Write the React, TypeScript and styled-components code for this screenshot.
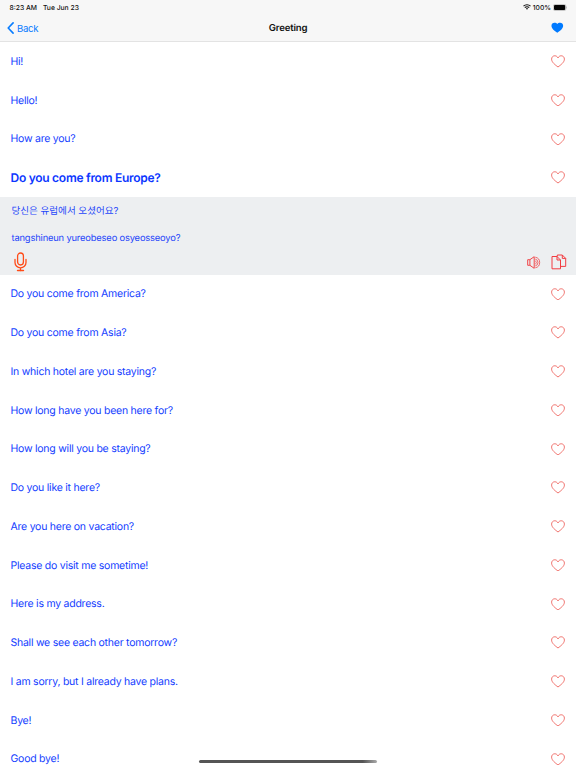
import React from "react";
import styled, { createGlobalStyle } from "styled-components";

const GlobalStyle = createGlobalStyle`
  *, *::before, *::after { box-sizing: border-box; }
  html, body { margin: 0; padding: 0; background: #fff; overflow: hidden; }
  body { font-family: Inter, "Noto Sans CJK KR", sans-serif; text-rendering: geometricPrecision; }
  svg { display: block; flex: none; }
`;

const Screen = styled.main`
  position: relative;
  width: 576px;
  height: 768px;
  display: flex;
  flex-direction: column;
  overflow: hidden;
  background: #fff;
`;

const Header = styled.header`
  flex: none;
  height: 42px;
  background: #f7f7f7;
  border-bottom: 1px solid #e3e3e3;
`;

const StatusBar = styled.div`
  height: 14px;
  padding: 0 9px 0 9.5px;
  display: flex;
  align-items: center;
  justify-content: space-between;
  font-size: 6.75px;
  font-weight: 500;
  color: #111;
`;

const StatusGroup = styled.div<{ $gap: number }>`
  display: flex;
  align-items: center;
  gap: ${(p) => p.$gap}px;
`;

const NavBar = styled.nav`
  height: 28px;
  padding: 0 12.5px 0 7px;
  display: grid;
  grid-template-columns: 1fr auto 1fr;
  align-items: center;
`;

const IconButton = styled.button`
  appearance: none;
  display: flex;
  align-items: center;
  border: 0;
  padding: 0;
  background: none;
  font: inherit;
  color: inherit;
`;

const BackButton = styled(IconButton)`
  gap: 3px;
  font-size: 9.6px;
  line-height: 13px;
  letter-spacing: -0.3px;
  color: #0a7cff;
`;

const Title = styled.h1`
  margin: 0 0 0 5.5px;
  padding-top: 1px;
  font-size: 9.6px;
  line-height: 13px;
  letter-spacing: -0.16px;
  font-weight: 600;
  color: #111;
`;

const NavAction = styled(IconButton)`
  justify-self: end;
`;

const Row = styled.div<{ $selected?: boolean }>`
  flex: none;
  height: 38.75px;
  padding: 0 11.5px 0 10.5px;
  display: flex;
  align-items: center;
  justify-content: space-between;
  color: ${(p) => (p.$selected ? "#0c37ff" : "#1440ff")};
  font-size: ${(p) => (p.$selected ? 12 : 10.5)}px;
  font-weight: ${(p) => (p.$selected ? 600 : 400)};
  letter-spacing: ${(p) => (p.$selected ? -0.27 : -0.24)}px;
  line-height: 16px;
  white-space: nowrap;
`;

const PhraseText = styled.span<{ $selected?: boolean }>`
  padding-top: ${(p) => (p.$selected ? 0.5 : 1)}px;
`;

const Detail = styled.section`
  flex: none;
  height: 77.5px;
  padding: 7px 9.5px 0 11.5px;
  background: #edeff1;
  color: #1d45fa;
  font-size: 9.55px;
`;

const Translation = styled.p`
  margin: 0;
  height: 16px;
  line-height: 16px;
  white-space: nowrap;
`;

const Romanization = styled(Translation)`
  margin-top: 10.5px;
  font-size: 9.35px;
  letter-spacing: -0.17px;
`;

const Actions = styled.div`
  margin-top: 5.5px;
  padding-left: 2.5px;
  height: 20px;
  display: flex;
  align-items: center;
  justify-content: space-between;
`;

const ActionGroup = styled.div`
  display: flex;
  align-items: center;
  gap: 10px;
`;

const HomeIndicator = styled.div`
  position: absolute;
  left: 199px;
  top: 760px;
  width: 178px;
  height: 3px;
  border-radius: 2px;
  background: linear-gradient(90deg, #555 0%, #555 92%, #aaa 100%);
`;

const HEART =
  "M7 12.3C4.2 10.1.6 7.5.6 4.2.6 2.2 2 .8 3.8.8 5.3.8 6.4 1.7 7 3 7.6 1.7 8.7.8 10.2.8c1.8 0 3.2 1.4 3.2 3.4 0 3.3-3.6 5.9-6.4 8.1Z";

const Heart = () => (
  <svg width="14" height="12.7" viewBox="0 0 14 13" preserveAspectRatio="none" fill="none" stroke="#ee625c" strokeWidth=".9" strokeLinejoin="round">
    <path d={HEART} />
  </svg>
);

const SolidHeart = () => (
  <svg width="12.6" height="11.4" viewBox="0 0 14 13" preserveAspectRatio="none" fill="#007aff">
    <path d="M7 12.4C4 10.2.5 7.6.5 4.3.5 2.2 2 .8 3.8.8 5.3.8 6.5 1.4 7 2.3 7.5 1.4 8.7.8 10.2.8c1.8 0 3.3 1.4 3.3 3.5 0 3.3-3.5 5.9-6.5 8.1Z" />
  </svg>
);

const Chevron = () => (
  <svg width="7" height="12" viewBox="0 0 7 12" fill="none" stroke="#087cff" strokeWidth="1.6" strokeLinecap="round" strokeLinejoin="round">
    <path d="M6.1.9 1.2 6l4.9 5.1" />
  </svg>
);

const Wifi = () => (
  <svg width="8" height="6" viewBox="0 0 8 6" fill="none" stroke="#111" strokeWidth="1.1">
    <path d="M.5 2.2a5 5 0 0 1 7 0M1.8 3.6a3.1 3.1 0 0 1 4.4 0" />
    <path d="M2.9 4.5a1.6 1.6 0 0 1 2.2 0L4 5.8Z" fill="#111" stroke="none" />
  </svg>
);

const Battery = () => (
  <svg width="14" height="7" viewBox="0 0 14 7">
    <rect x=".3" y=".5" width="12.6" height="6" rx="1.6" fill="none" stroke="#999" strokeWidth=".5" />
    <rect x="1" y="1.1" width="11.2" height="4.8" rx="1" fill="#050505" />
    <path d="M13.3 2.5c.7.2.7 1.8 0 2Z" fill="#999" />
  </svg>
);

const Microphone = () => (
  <svg width="13" height="20" viewBox="0 0 13 20" fill="none" stroke="#ff4b18" strokeWidth="1.3" strokeLinecap="round">
    <rect x="3.6" y="1" width="5.8" height="12" rx="2.9" />
    <path d="M1 7.3v3.1a5.5 5.5 0 0 0 11 0V7.3M6.5 16v2.5" />
    <path d="M3.6 18.5h5.8" strokeWidth="1.6" />
  </svg>
);

const Speaker = () => (
  <svg width="14" height="13" viewBox="0 0 14 13" fill="none" stroke="#f04448" strokeWidth="1" strokeLinejoin="round">
    <path d="M.7 3.7h2.2L7.2.7v11.6L2.9 9.3H.7ZM2.9 3.7v5.6" />
    <path d="M8.3 1.2a5.4 5.4 0 0 1 0 10.6M8.3 3.1a3.5 3.5 0 0 1 0 6.8M8.3 5a1.6 1.6 0 0 1 0 3" strokeWidth=".8" />
  </svg>
);

const Copy = () => (
  <svg width="16" height="16" viewBox="0 0 16 16" fill="none" stroke="#f23b40" strokeWidth="1" strokeLinejoin="round">
    <path d="M6.3 2.5V1h5l3.4 3.4v8H9.5M11.3 1v3.4h3.4" />
    <path d="M1 2.5h5L9.5 6v8.8H1ZM6 2.5V6h3.5" />
  </svg>
);

const BEFORE = ["Hi!", "Hello!", "How are you?"];
const SELECTED = "Do you come from Europe?";
const AFTER = [
  "Do you come from America?",
  "Do you come from Asia?",
  "In which hotel are you staying?",
  "How long have you been here for?",
  "How long will you be staying?",
  "Do you like it here?",
  "Are you here on vacation?",
  "Please do visit me sometime!",
  "Here is my address.",
  "Shall we see each other tomorrow?",
  "I am sorry, but I already have plans.",
  "Bye!",
  "Good bye!",
];

const Phrase = ({ text, selected }: { text: string; selected?: boolean }) => (
  <Row $selected={selected}>
    <PhraseText $selected={selected}>{text}</PhraseText>
    <IconButton aria-label="Add to favorites">
      <Heart />
    </IconButton>
  </Row>
);

export default function App() {
  return (
    <>
      <GlobalStyle />
      <Screen>
        <Header>
          <StatusBar>
            <StatusGroup $gap={6}>
              <span>8:23 AM</span>
              <span>Tue Jun 23</span>
            </StatusGroup>
            <StatusGroup $gap={2}>
              <Wifi />
              <span>100%</span>
              <Battery />
            </StatusGroup>
          </StatusBar>
          <NavBar>
            <BackButton>
              <Chevron />
              Back
            </BackButton>
            <Title>Greeting</Title>
            <NavAction aria-label="Favorites">
              <SolidHeart />
            </NavAction>
          </NavBar>
        </Header>
        {BEFORE.map((text) => (
          <Phrase key={text} text={text} />
        ))}
        <Phrase text={SELECTED} selected />
        <Detail>
          <Translation lang="ko">당신은 유럽에서 오셨어요?</Translation>
          <Romanization>tangshineun yureobeseo osyeosseoyo?</Romanization>
          <Actions>
            <IconButton aria-label="Record">
              <Microphone />
            </IconButton>
            <ActionGroup>
              <IconButton aria-label="Listen">
                <Speaker />
              </IconButton>
              <IconButton aria-label="Copy">
                <Copy />
              </IconButton>
            </ActionGroup>
          </Actions>
        </Detail>
        {AFTER.map((text) => (
          <Phrase key={text} text={text} />
        ))}
        <HomeIndicator />
      </Screen>
    </>
  );
}
